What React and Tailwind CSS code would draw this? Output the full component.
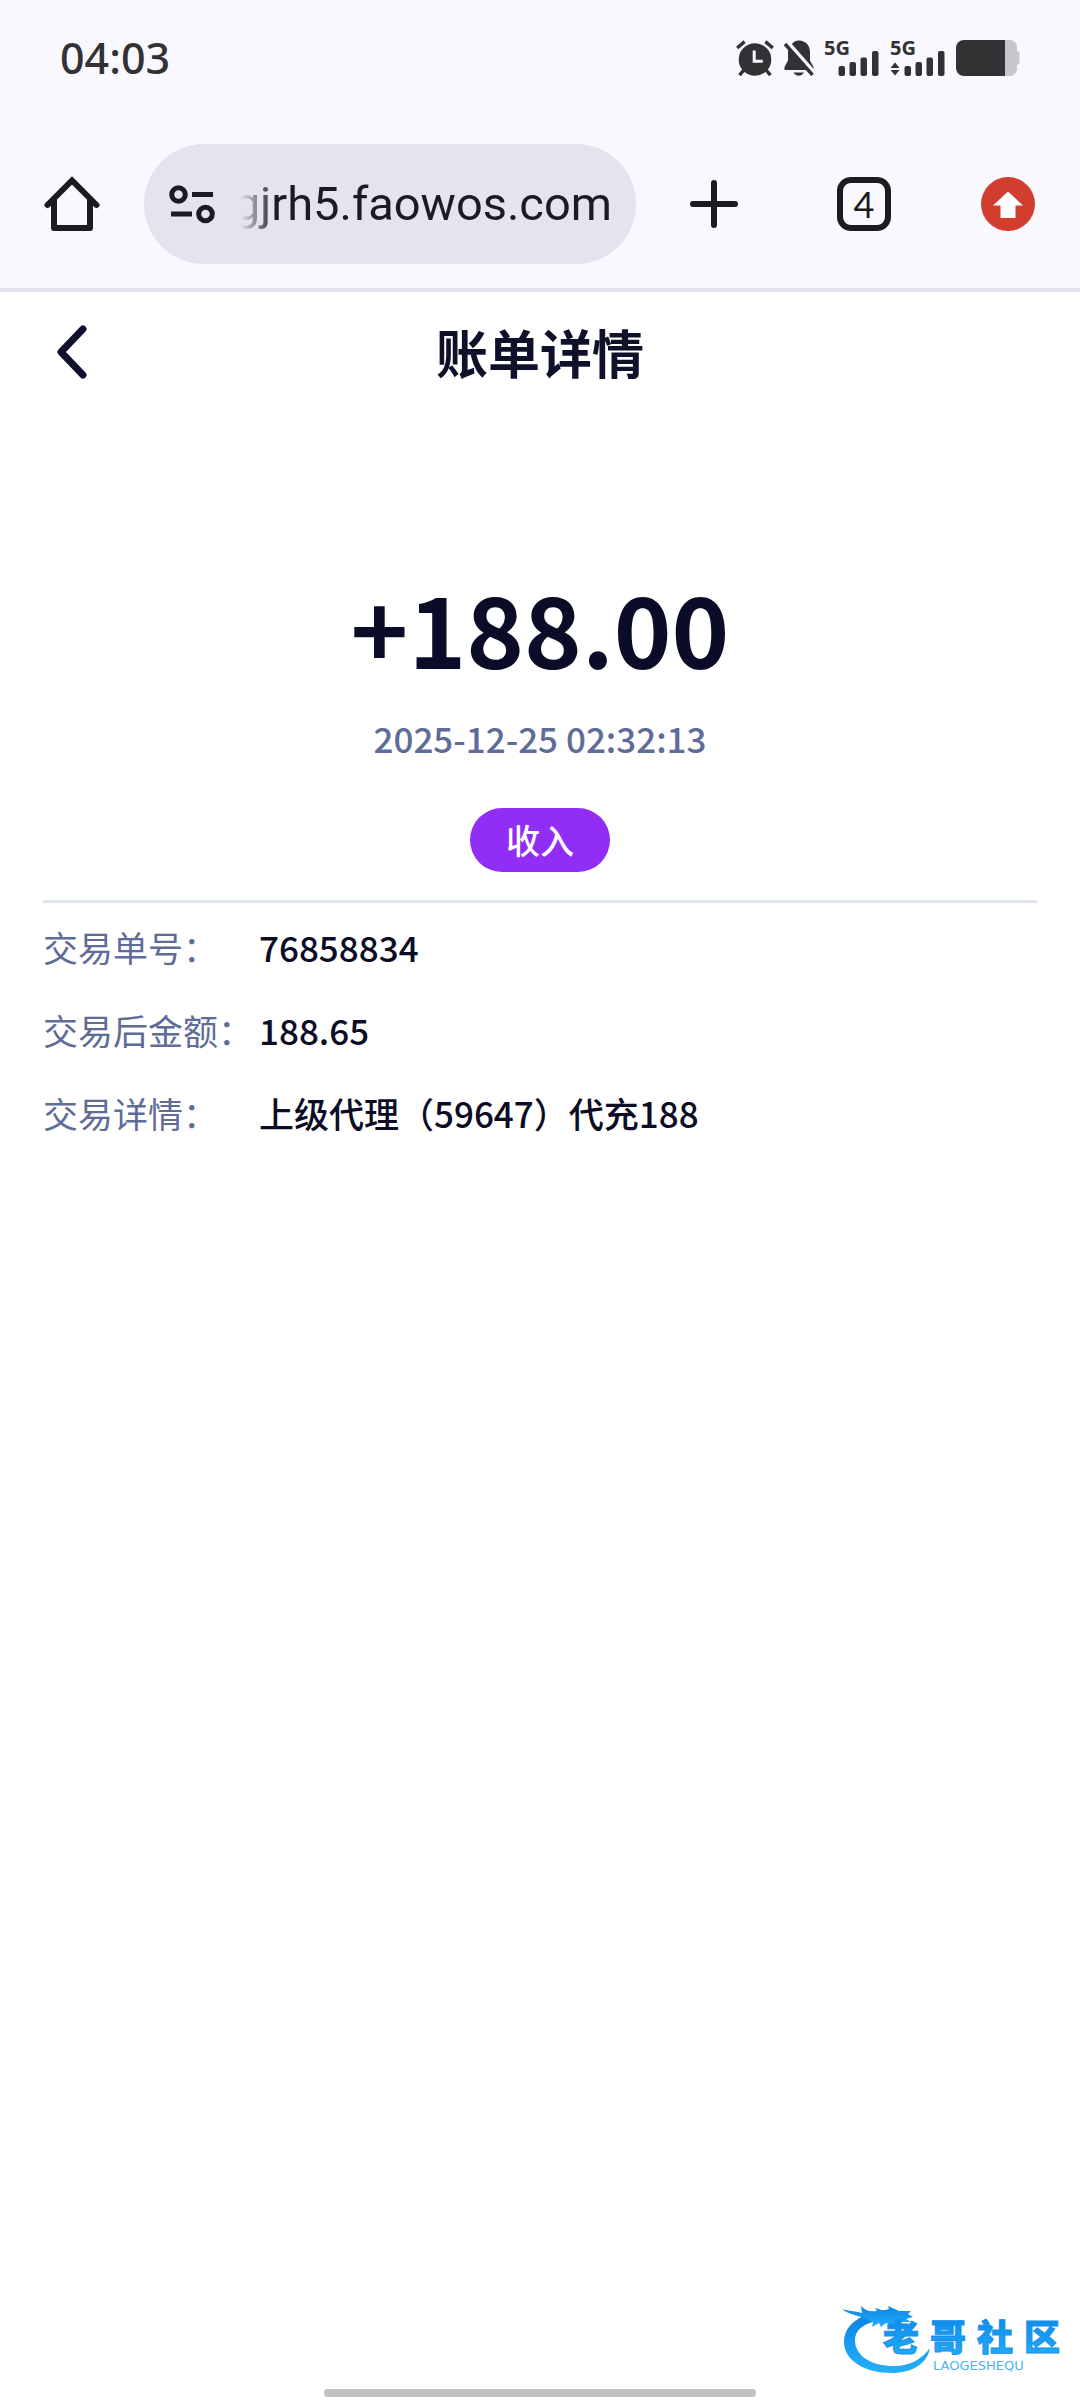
import { useState } from "react";

function AlarmIcon() {
	return (
		<svg className="h-9 w-[38px]" viewBox="0 0 38 36" fill="none" aria-hidden="true">
			<g stroke="#323234" strokeWidth="3.4">
				<path d="M1.2 8 8.6 1.6M36.8 8 29.4 1.6M3.5 35.2 8 30M34.5 35.2 30 30" />
			</g>
			<circle cx="19" cy="19.5" r="16.3" fill="#323234" />
			<path d="M18.2 10.5v10.8h8.6" stroke="#f8f8fe" strokeWidth="3" />
		</svg>
	);
}

function MutedBellIcon() {
	return (
		<svg className="h-9 w-[30px]" viewBox="0 0 30 36" aria-hidden="true">
			<path d="M7 5.5C8.800 2.300 11.500.500 15 .500c6.500 0 11 5 11 11.500v8.500L29.500 27v3H.500v-3L4 20.500V12c0-2.500 1-4.700 3-6.500z" fill="#323234" />
			<path d="M9.500 32.500H20c-1 2-2.800 3.200-5.200 3.200s-4.300-1.200-5.300-3.200z" fill="#323234" />
			<path d="M3 1.500 31.500 34" stroke="#f8f8fe" strokeWidth="4" />
			<path d="M1 4 28.500 35" stroke="#323234" strokeWidth="3.400" />
		</svg>
	);
}

function Signal({ data }) {
	return (
		<div className="relative h-9 w-[56px]">
			<span className="absolute left-0 top-0 text-[20px] font-bold leading-4">5G</span>
			<svg className="h-9 w-[56px]" viewBox="0 0 56 36" fill="#323234" aria-hidden="true">
				{data && <path d="M5 22.500 9.500 28H.5zM.5 30h9L5 35.500z" />}
				<rect x="14.500" y="26" width="6.500" height="10" rx="2" />
				<rect x="25.500" y="22" width="6.500" height="14" rx="2" />
				<rect x="36.500" y="17.500" width="6.500" height="18.500" rx="2" />
				<rect x="48" y="11" width="6.500" height="25" rx="2" />
			</svg>
		</div>
	);
}

function BatteryIcon() {
	return (
		<svg className="h-9 w-16" viewBox="0 0 64 36" aria-hidden="true">
			<path d="M49 0h5a7 7 0 0 1 7 7v4.500h1.500q1 0 1 1v11q0 1-1 1H61V29a7 7 0 0 1-7 7h-5z" fill="#c8c6cc" />
			<path d="M8 0h41v36H8a8 8 0 0 1-8-8V8a8 8 0 0 1 8-8z" fill="#323234" />
		</svg>
	);
}

function StatusBar() {
	return (
		<div className="flex h-[116px] items-center justify-between px-[60px] text-[#323234]">
			<span className="font-['Noto_Sans'] text-[43px] font-medium">04:03</span>
			<div className="flex items-center gap-[10px] font-['Noto_Sans']">
				<AlarmIcon />
				<MutedBellIcon />
				<Signal />
				<Signal data />
				<BatteryIcon />
			</div>
		</div>
	);
}

function BrowserBar() {
	const [url, setUrl] = useState("gjrh5.faowos.com");

	return (
		<div className="flex h-44 items-start border-b-4 border-[#e2e1ec] pt-7">
			<button aria-label="主页" className="flex h-[120px] w-36 items-center justify-center">
				<svg className="h-[56px] w-[56px]" viewBox="0 0 56 56" fill="none" stroke="#1b1b21" strokeWidth="6" strokeLinejoin="round" aria-hidden="true">
					<path d="M3.500 29 28 4.500 52.500 29" strokeLinecap="round" strokeLinejoin="miter" />
					<path d="M10 24v28h36V24" />
				</svg>
			</button>

			{/* Address */}
			<div className="mr-[3px] flex h-[120px] min-w-0 flex-1 items-center rounded-full bg-[#e4e3ef] pl-[25px] pr-6">
				<button aria-label="网站设置" className="shrink-0">
					<svg className="h-10 w-[46px]" viewBox="0 0 46 40" fill="none" stroke="#1b1b21" strokeWidth="5" aria-hidden="true">
						<circle cx="9.500" cy="10.500" r="6.800" />
						<path d="M23 10.500h21M2 30h21" />
						<circle cx="36.500" cy="30" r="6.800" />
					</svg>
				</button>
				<input aria-label="网址" value={url} onChange={(e) => setUrl(e.target.value)} className="ml-3 min-w-0 flex-1 bg-transparent text-right font-[Roboto] text-[47px] leading-[60px] text-[#1b1b21] outline-none [mask-image:linear-gradient(to_right,transparent_14px,black_48px)]" />
			</div>

			<button aria-label="新标签页" className="flex h-[120px] w-[150px] items-center justify-center">
				<svg className="h-12 w-12" viewBox="0 0 48 48" fill="none" stroke="#1b1b21" strokeWidth="6" strokeLinecap="round" aria-hidden="true">
					<path d="M24 3v42M3 24h42" />
				</svg>
			</button>
			<button aria-label="切换标签页" className="flex h-[120px] w-[150px] items-center justify-center">
				<span className="flex h-[54px] w-[54px] items-center justify-center rounded-[14px] border-[6px] border-[#1b1b21] font-[Lato] text-[36px] leading-10 text-[#1b1b21]">4</span>
			</button>
			<button aria-label="更新" className="mr-[3px] flex h-[120px] w-[138px] items-center justify-center">
				<svg className="h-[54px] w-[54px]" viewBox="0 0 54 54" aria-hidden="true">
					<circle cx="27" cy="27" r="27" fill="#d23e2e" />
					<path d="M27 14.500 42 28.500h-7.500V41h-15V28.500H12z" fill="#fff" />
				</svg>
			</button>
		</div>
	);
}

function DetailRow({ label, value }) {
	return (
		<div className="flex">
			<dt className="w-[216px] shrink-0 whitespace-nowrap text-[#5f6c98]">{label}</dt>
			<dd className="font-medium text-[#0c0d24]">{value}</dd>
		</div>
	);
}

const logoChars = [
	{ char: "老", x: 41 },
	{ char: "哥", x: 88 },
	{ char: "社", x: 135 },
	{ char: "区", x: 182 },
];

function Watermark() {
	return (
		<div className="flex justify-end pr-4">
			<svg className="h-[72px] w-[222px]" viewBox="0 0 222 72" role="img" aria-label="老哥社区 LAOGESHEQU">
				<defs>
					<linearGradient id="blue" x1="0" y1="0" x2="0" y2="1">
						<stop offset="0" stopColor="#0b84e8" />
						<stop offset="1" stopColor="#25b0f8" />
					</linearGradient>
				</defs>
				<g fill="url(#blue)">
					{/* Dragon body */}
					<path d="M27 9C11 14 2 24 2 37c0 18 20 31 48 31 20 0 35-9 38-25-8 11-20 18-36 18-23 0-39-10-39-26 0-9 7-16 22-19z" />
					{/* Dragon head */}
					<path d="M0 4c6 2 13 2 20 4l-1-7c5 5 10 6 16 5l-2-3c6 2 9 3 14 1l-1-3 11 5 12 0-3 3 5 3-7 2 5 3-12 0-7 3-6-2-5 4-2-4-7 4 1-5-7-3C16 10 7 10 0 4z" />
				</g>
				<g fill="url(#blue)" stroke="#158fec" strokeWidth="1" fontFamily="Noto Sans CJK SC, sans-serif" fontWeight="900" fontSize="36">
					{logoChars.map(({ char, x }) => (
						<text key={char} x={x} y="46">{char}</text>
					))}
				</g>
				<text x="91" y="65" fill="#4db4f2" fontFamily="DejaVu Sans, sans-serif" fontSize="13">LAOGESHEQU</text>
			</svg>
		</div>
	);
}

const details = [
	{ label: "交易单号：", value: "76858834" },
	{ label: "交易后金额：", value: "188.65" },
	{ label: "交易详情：", value: "上级代理（59647）代充188" },
];

export default function App() {
	return (
		<div className="flex min-h-screen flex-col bg-white font-['Noto_Sans_CJK_SC',sans-serif]">
			<header className="bg-[#f9f8fe]">
				<StatusBar />
				<BrowserBar />
			</header>

			{/* Title */}
			<div className="grid h-[120px] grid-cols-[144px_1fr_144px] items-center">
				<button aria-label="返回" className="flex h-full items-center justify-center">
					<svg className="h-14 w-8" viewBox="0 0 32 56" fill="none" stroke="#0f1029" strokeWidth="7" strokeLinecap="round" strokeLinejoin="round" aria-hidden="true">
						<path d="M27 5 5 28l22 23" />
					</svg>
				</button>
				<h1 className="text-center text-[52px] font-bold leading-[72px] text-[#0f1029]">账单详情</h1>
			</div>

			<main className="flex-1 px-[43px]">
				<section className="flex flex-col items-center border-b-[3px] border-[#dfe5ee] pb-7 pt-[142px]">
					<p className="text-[98px] font-bold leading-[144px] text-[#0b0d28]">+188.00</p>
					<time className="mt-[14px] text-[35px] font-medium leading-[52px] text-[#5f6c98]">2025-12-25 02:32:13</time>
					<span className="mt-11 flex h-16 w-[140px] items-center justify-center rounded-full bg-[#912ef5] text-[34px] font-medium leading-[52px] text-white">收入</span>
				</section>

				<dl className="flex flex-col gap-[31px] pt-[18px] text-[35px] leading-[52px]">
					{details.map((row) => (
						<DetailRow key={row.label} label={row.label} value={row.value} />
					))}
				</dl>
			</main>

			<footer>
				<Watermark />
				<div className="mx-auto mb-[3px] mt-3 h-[8px] w-2/5 rounded-full bg-[#c2c2c2]" />
			</footer>
		</div>
	);
}
